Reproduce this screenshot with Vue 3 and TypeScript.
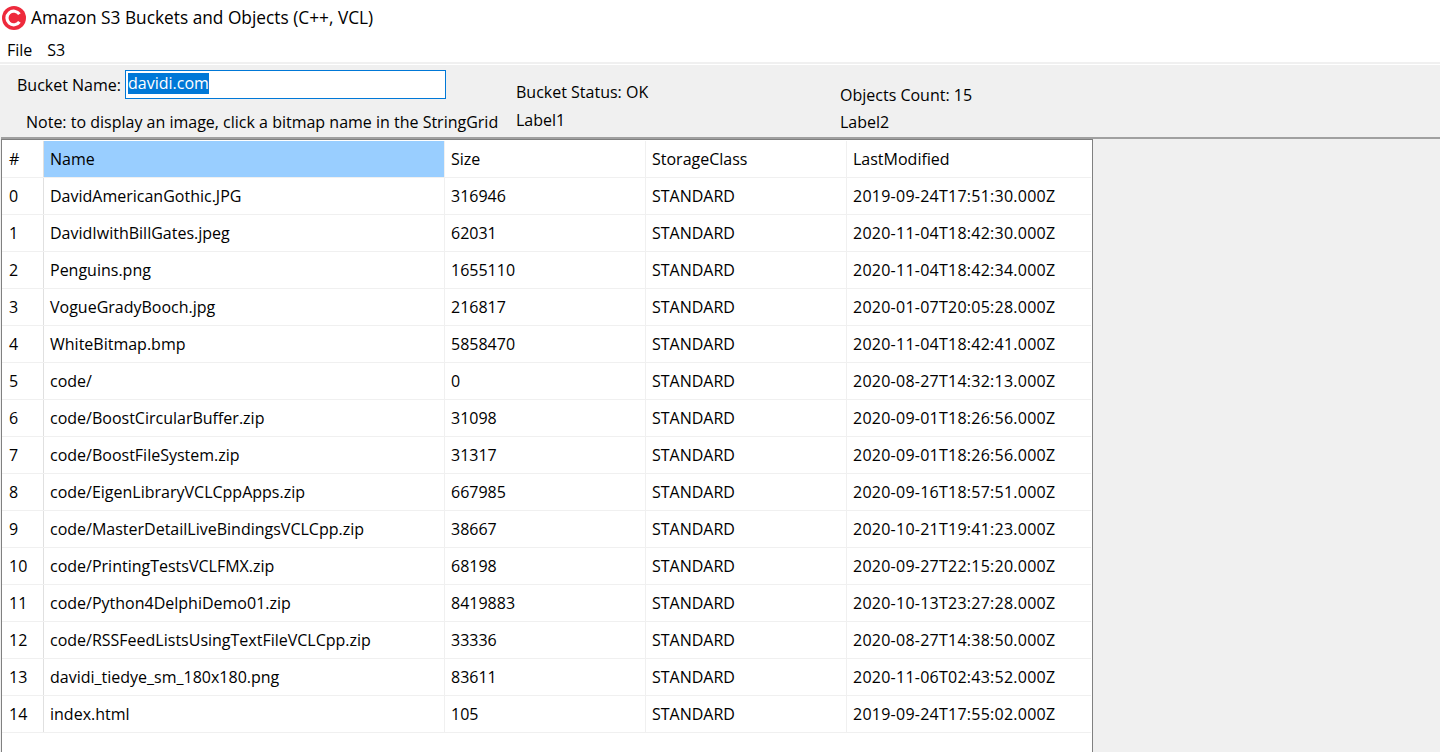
<script setup lang="ts">
interface S3Object {
  readonly name: string;
  readonly size: number;
  readonly modified: string;
}

const objects: S3Object[] = [
  { name: 'DavidAmericanGothic.JPG', size: 316946, modified: '2019-09-24T17:51:30.000Z' },
  { name: 'DavidIwithBillGates.jpeg', size: 62031, modified: '2020-11-04T18:42:30.000Z' },
  { name: 'Penguins.png', size: 1655110, modified: '2020-11-04T18:42:34.000Z' },
  { name: 'VogueGradyBooch.jpg', size: 216817, modified: '2020-01-07T20:05:28.000Z' },
  { name: 'WhiteBitmap.bmp', size: 5858470, modified: '2020-11-04T18:42:41.000Z' },
  { name: 'code/', size: 0, modified: '2020-08-27T14:32:13.000Z' },
  { name: 'code/BoostCircularBuffer.zip', size: 31098, modified: '2020-09-01T18:26:56.000Z' },
  { name: 'code/BoostFileSystem.zip', size: 31317, modified: '2020-09-01T18:26:56.000Z' },
  { name: 'code/EigenLibraryVCLCppApps.zip', size: 667985, modified: '2020-09-16T18:57:51.000Z' },
  { name: 'code/MasterDetailLiveBindingsVCLCpp.zip', size: 38667, modified: '2020-10-21T19:41:23.000Z' },
  { name: 'code/PrintingTestsVCLFMX.zip', size: 68198, modified: '2020-09-27T22:15:20.000Z' },
  { name: 'code/Python4DelphiDemo01.zip', size: 8419883, modified: '2020-10-13T23:27:28.000Z' },
  { name: 'code/RSSFeedListsUsingTextFileVCLCpp.zip', size: 33336, modified: '2020-08-27T14:38:50.000Z' },
  { name: 'davidi_tiedye_sm_180x180.png', size: 83611, modified: '2020-11-06T02:43:52.000Z' },
  { name: 'index.html', size: 105, modified: '2019-09-24T17:55:02.000Z' },
];
</script>

<template>
  <div class="window">
    <header class="titlebar">
      <svg class="logo" width="24" height="24" viewBox="0 0 24 24" aria-hidden="true">
        <circle cx="12" cy="12" r="12" fill="#ee2a3c" />
        <path d="M17.4 8.2A6.8 6.8 0 1 0 17.4 15.8" fill="none" stroke="#fff" stroke-width="3.2" />
      </svg>
      <span class="title">Amazon S3 Buckets and Objects (C++, VCL)</span>
    </header>

    <nav class="menubar">
      <span>File</span>
      <span>S3</span>
    </nav>

    <section class="panel">
      <div class="panel-left">
        <div class="bucket-row">
          <label class="bucket-label">Bucket Name:</label>
          <div class="bucket-input"><span class="selected">davidi.com</span></div>
        </div>
        <div class="note">Note: to display an image, click a bitmap name in the StringGrid</div>
      </div>
      <div class="panel-col status-col">
        <div>Bucket Status: OK</div>
        <div>Label1</div>
      </div>
      <div class="panel-col count-col">
        <div>Objects Count: 15</div>
        <div>Label2</div>
      </div>
    </section>

    <main class="content">
      <div class="grid">
        <div class="row head">
          <div class="cell fixed">#</div>
          <div class="cell name active">Name</div>
          <div class="cell">Size</div>
          <div class="cell">StorageClass</div>
          <div class="cell last">LastModified</div>
        </div>
        <div v-for="(obj, i) in objects" :key="obj.name" class="row">
          <div class="cell fixed">{{ i }}</div>
          <div class="cell name">{{ obj.name }}</div>
          <div class="cell">{{ obj.size }}</div>
          <div class="cell">STANDARD</div>
          <div class="cell last stamp">{{ obj.modified }}</div>
        </div>
      </div>
    </main>
  </div>
</template>

<style>
html,
body {
  margin: 0;
  background: #f0f0f0;
  overflow: hidden;
}
</style>

<style scoped>
.window {
  width: 1440px;
  height: 752px;
  display: flex;
  flex-direction: column;
  overflow: hidden;
  background: #f0f0f0;
  color: #000;
  font-family: "Open Sans", "Noto Sans", sans-serif;
  font-size: 16px;
  line-height: 20px;
}

.titlebar {
  height: 36px;
  display: flex;
  align-items: center;
  gap: 5px;
  padding-left: 2px;
  background: #fff;
  box-sizing: border-box;
}

.logo {
  flex: none;
}

.title {
  font-size: 17.3px;
}

.menubar {
  height: 28px;
  display: flex;
  gap: 15px;
  padding: 4px 0 0 7px;
  background: #fff;
  border-bottom: 2px solid #f0f0f0;
  box-sizing: border-box;
  margin-bottom: 1px;
  box-shadow: 0 1px 0 #fff;
}

.panel {
  height: 74px;
  display: flex;
  border-bottom: 2px solid #a0a0a0;
  box-sizing: border-box;
  margin-left: 1px;
}

.panel-left {
  width: 515px;
  flex: none;
  padding: 5px 0 0 16px;
  box-sizing: border-box;
}

.bucket-row {
  display: flex;
  align-items: center;
  gap: 4px;
}

.bucket-label {
  width: 104px;
  white-space: nowrap;
}

.bucket-input {
  width: 321px;
  height: 29px;
  box-sizing: border-box;
  border: 1px solid #0078d7;
  background: #fff;
  padding: 2px;
}

.selected {
  display: inline-block;
  background: #0078d7;
  color: #fff;
  line-height: 21px;
}

.note {
  margin: 13px 0 0 9px;
  white-space: nowrap;
}

.panel-col {
  display: flex;
  flex-direction: column;
  gap: 8px;
}

.status-col {
  width: 324px;
  padding-top: 17px;
}

.count-col {
  padding-top: 20px;
  gap: 7px;
}

.content {
  flex: 1;
  min-height: 0;
}

.grid {
  width: 1092px;
  height: 100%;
  margin-left: 1px;
  padding: 1px 1px 0 0;
  box-sizing: border-box;
  background: #fff;
  border: solid #808080;
  border-width: 1px 1px 0 1px;
}

.row {
  height: 37px;
  display: grid;
  grid-template-columns: 42px 401px 201px 201px 243px;
  box-sizing: border-box;
  border-bottom: 1px solid #f0f0f0;
}

.cell {
  padding: 8px 0 0 6px;
  border-right: 1px solid #f0f0f0;
  white-space: nowrap;
  box-sizing: border-box;
}

.fixed {
  padding-left: 7px;
  border-right: 1px solid #e0e0e0;
}

.active {
  background: #99ceff;
}

.last {
  border-right: 0;
}

.stamp {
  letter-spacing: 0.25px;
}
</style>
